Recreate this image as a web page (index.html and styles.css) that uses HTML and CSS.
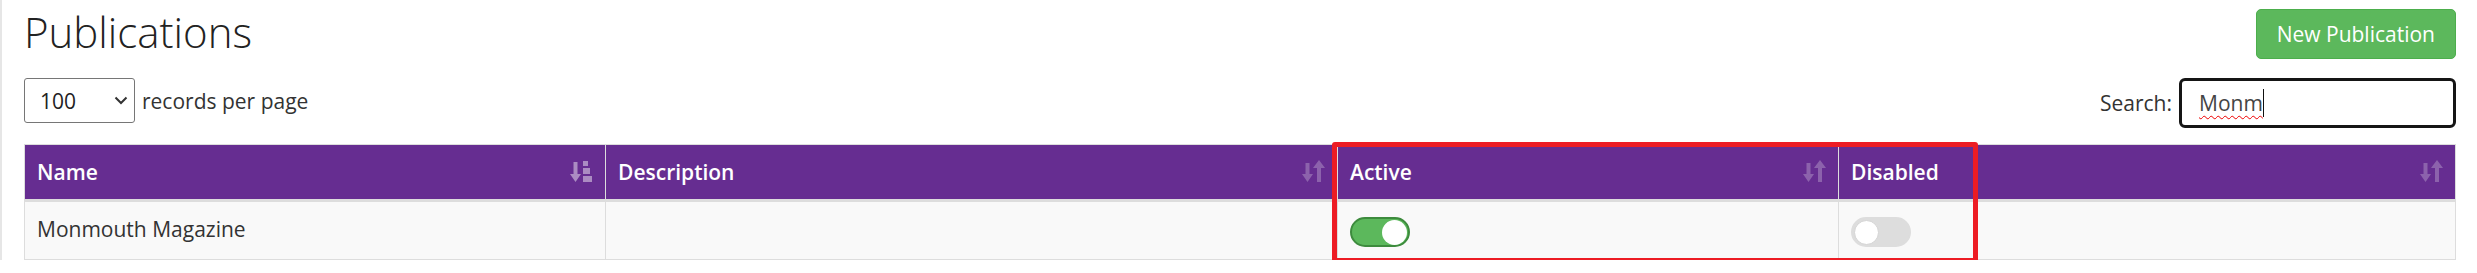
FILE: index.html
```html
<!DOCTYPE html>
<html>
<head>
	<title>Publications</title>
	<meta charset="UTF-8">
	<link rel="stylesheet" href="styles.css">
</head>
<body>
	<div class="page">
		<div class="page-head">
			<h1 class="page-title">Publications</h1>
			<button type="button" class="btn-new">New Publication</button>
		</div>

		<div class="table-tools">
			<div class="length">
				<div class="length-select">
					<span>100</span>
					<svg width="14" height="9" viewBox="0 0 14 9"><path d="M1.5 1.5 L7 7 L12.5 1.5" fill="none" stroke="#333" stroke-width="2"/></svg>
				</div>
				<span class="length-label">records per page</span>
			</div>
			<div class="search">
				<span class="search-label">Search:</span>
				<div class="search-box"><span class="typed">Monm</span><span class="caret"></span></div>
			</div>
		</div>

		<div class="table-wrap">
			<table class="pub-table">
				<colgroup>
					<col class="col-name">
					<col class="col-desc">
					<col class="col-active">
					<col>
				</colgroup>
				<thead>
					<tr>
						<th>Name
							<svg class="sort-icon sort-asc" width="23" height="23" viewBox="0 0 23 23">
								<rect x="3.5" y="2" width="4" height="12"/>
								<polygon points="0,14 11,14 5.5,22"/>
								<rect x="13" y="1" width="5" height="5"/>
								<rect x="13" y="8" width="7" height="6"/>
								<rect x="13" y="16" width="9" height="6"/>
							</svg>
						</th>
						<th>Description
							<svg class="sort-icon" width="23" height="23" viewBox="0 0 23 23">
								<rect x="3.5" y="3" width="4" height="11"/>
								<polygon points="0,14 11,14 5.5,22"/>
								<polygon points="11,8 23,8 17,0"/>
								<rect x="15" y="8" width="4" height="14"/>
							</svg>
						</th>
						<th>Active
							<svg class="sort-icon" width="23" height="23" viewBox="0 0 23 23">
								<rect x="3.5" y="3" width="4" height="11"/>
								<polygon points="0,14 11,14 5.5,22"/>
								<polygon points="11,8 23,8 17,0"/>
								<rect x="15" y="8" width="4" height="14"/>
							</svg>
						</th>
						<th>Disabled
							<svg class="sort-icon" width="23" height="23" viewBox="0 0 23 23">
								<rect x="3.5" y="3" width="4" height="11"/>
								<polygon points="0,14 11,14 5.5,22"/>
								<polygon points="11,8 23,8 17,0"/>
								<rect x="15" y="8" width="4" height="14"/>
							</svg>
						</th>
					</tr>
				</thead>
				<tbody>
					<tr>
						<td>Monmouth Magazine</td>
						<td></td>
						<td class="switch-cell"><span class="switch switch-on"><span class="knob"></span></span></td>
						<td class="switch-cell"><span class="switch"><span class="knob"></span></span></td>
					</tr>
				</tbody>
			</table>
			<!-- annotation box drawn over the two switch columns -->
			<div class="highlight"></div>
		</div>
	</div>
</body>
</html>
```

FILE: styles.css
```css
* { box-sizing: border-box; }

body {
	margin: 0;
	border-left: 2px solid #e6e6e6;
	font-family: "Open Sans", "Noto Sans", sans-serif;
	font-size: 21px;
	line-height: 30px;
	color: #333;
	background: #fff;
}

.page {
	padding: 9px 21px 0 22px;
}

.page-head {
	display: flex;
	justify-content: space-between;
	align-items: flex-start;
}

.page-title {
	margin: 0;
	font-size: 42px;
	font-weight: 300;
	line-height: 46px;
	color: #222;
}

.btn-new {
	height: 50px;
	padding: 0 20px;
	font-family: inherit;
	font-size: 21px;
	color: #fff;
	background: #5cb85c;
	border: 1px solid #4cae4c;
	border-radius: 5px;
}

.table-tools {
	display: flex;
	justify-content: space-between;
	align-items: flex-start;
	margin-top: 19px;
}

.length, .search {
	display: flex;
	align-items: center;
}

.length-select {
	display: flex;
	justify-content: space-between;
	align-items: center;
	width: 111px;
	height: 45px;
	padding: 0 6px 0 15px;
	border: 1px solid #767676;
	border-radius: 3px;
	color: #222;
}

.length-label {
	margin-left: 7px;
}

.search-label {
	margin-right: 7px;
}

.search-box {
	display: flex;
	align-items: center;
	width: 277px;
	height: 50px;
	padding-left: 17px;
	border: 3px solid #151515;
	border-radius: 6px;
}

.typed {
	color: #444;
	text-decoration: underline wavy #e00;
	text-decoration-thickness: 1px;
	text-underline-offset: 4px;
}

.caret {
	width: 1px;
	height: 28px;
	background: #111;
}

.table-wrap {
	position: relative;
	margin-top: 16px;
}

.pub-table {
	width: 100%;
	table-layout: fixed;
	border-collapse: collapse;
	border: 1px solid #ddd;
}

.col-name { width: 581px; }
.col-desc { width: 732px; }
.col-active { width: 501px; }

.pub-table th {
	position: relative;
	padding: 12px 40px 12px 12px;
	text-align: left;
	font-weight: 600;
	color: #fff;
	background: #662d91;
	border: 1px solid #ddd;
	border-bottom-width: 3px;
}

.pub-table th:last-child {
	border-right-color: #ddd;
}

.sort-icon {
	position: absolute;
	right: 12px;
	top: 50%;
	margin-top: -12px;
	fill: #fff;
	opacity: 0.25;
}

.sort-icon.sort-asc {
	opacity: 0.45;
}

.pub-table td {
	padding: 12px;
	vertical-align: top;
	background: #f9f9f9;
	border: 1px solid #ddd;
}

.pub-table td.switch-cell {
	padding-top: 15px;
}

.switch {
	display: flex;
	align-items: center;
	width: 60px;
	height: 30px;
	padding: 0 1px;
	border: 2px solid #ddd;
	border-radius: 15px;
	background: #ddd;
}

.switch-on {
	justify-content: flex-end;
	border-color: #3d8b3d;
	background: #5cb85c;
}

.knob {
	width: 25px;
	height: 25px;
	border-radius: 50%;
	background: #fff;
	border: 1px solid #d4d4d4;
}

.switch-on .knob {
	border: none;
}

.highlight {
	position: absolute;
	left: 1308px;
	top: -2px;
	width: 646px;
	height: 121px;
	border: 5px solid #ed1c24;
	border-radius: 3px;
	pointer-events: none;
}
```
